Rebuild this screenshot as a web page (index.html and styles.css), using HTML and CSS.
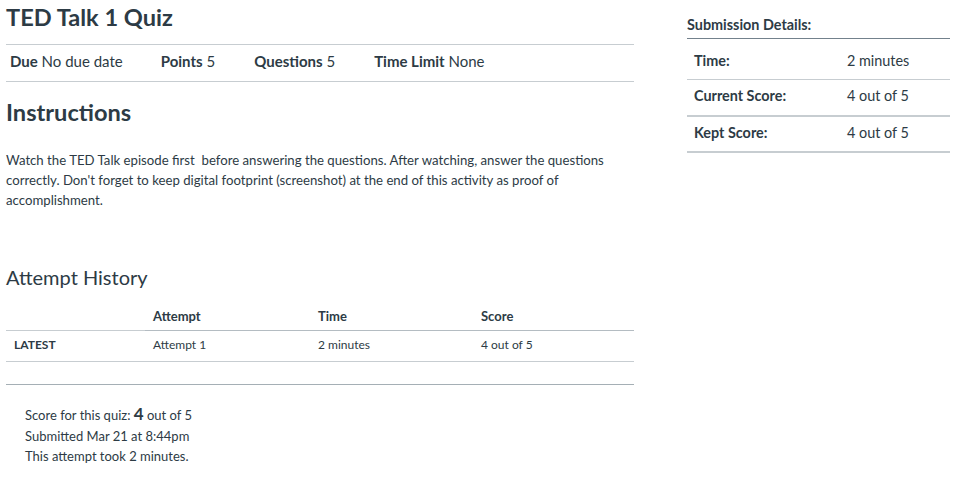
FILE: index.html
```html
<!DOCTYPE html>
<html>
<head>
<meta charset="utf-8">
<title>TED Talk 1 Quiz</title>
<link rel="stylesheet" href="styles.css">
</head>
<body>
<div class="page">
  <main class="main">
    <h1 class="title">TED Talk 1 Quiz</h1>
    <ul class="quiz-meta">
      <li class="meta-item"><span class="meta-label">Due</span> No due date</li>
      <li class="meta-item"><span class="meta-label">Points</span> 5</li>
      <li class="meta-item"><span class="meta-label">Questions</span> 5</li>
      <li class="meta-item"><span class="meta-label">Time Limit</span> None</li>
    </ul>
    <h2 class="section-title">Instructions</h2>
    <p class="instructions">Watch the TED Talk episode first&nbsp; before answering the questions. After watching, answer the questions correctly. Don't forget to keep digital footprint (screenshot) at the end of this activity as proof of accomplishment.</p>

    <h2 class="history-title">Attempt History</h2>
    <table class="history">
      <thead>
        <tr>
          <th class="col-first"></th>
          <th class="col-attempt">Attempt</th>
          <th class="col-time">Time</th>
          <th class="col-score">Score</th>
        </tr>
      </thead>
      <tbody>
        <tr>
          <td class="latest">LATEST</td>
          <td>Attempt 1</td>
          <td>2 minutes</td>
          <td>4 out of 5</td>
        </tr>
      </tbody>
    </table>
    <div class="history-end"></div>

    <div class="result">
      <div class="result-line first">Score for this quiz: <span class="big-score">4</span> out of 5</div>
      <div class="result-line">Submitted Mar 21 at 8:44pm</div>
      <div class="result-line">This attempt took 2 minutes.</div>
    </div>
  </main>

  <aside class="sidebar">
    <div class="details-title">Submission Details:</div>
    <div class="details-row row-1">
      <div class="details-label">Time:</div>
      <div class="details-value">2 minutes</div>
    </div>
    <div class="details-row row-2">
      <div class="details-label">Current Score:</div>
      <div class="details-value">4 out of 5</div>
    </div>
    <div class="details-row row-3">
      <div class="details-label">Kept Score:</div>
      <div class="details-value">4 out of 5</div>
    </div>
  </aside>
</div>
</body>
</html>
```

FILE: styles.css
```css
* { box-sizing: border-box; }

html, body {
  margin: 0;
  padding: 0;
  background: #ffffff;
}

body {
  font-family: "Lato", "Liberation Sans", sans-serif;
  color: #2d3b45;
}

.page {
  display: flex;
  align-items: flex-start;
  padding-left: 6px;
}

.main {
  width: 628px;
  flex: none;
}

.title {
  margin: 0 0 12px;
  padding-top: 2px;
  font-size: 23.6px;
  line-height: 30px;
  font-weight: 700;
}

.quiz-meta {
  list-style: none;
  margin: 0;
  padding: 0 0 3px 4px;
  height: 38px;
  display: flex;
  border-top: 1px solid #c7cdd1;
  border-bottom: 1px solid #c7cdd1;
  font-size: 15px;
  line-height: 33px;
}

.meta-item {
  margin-right: 39px;
}

.meta-item:first-child {
  margin-right: 38px;
}

.meta-label {
  font-weight: 700;
}

.section-title {
  margin: 15px 0 0;
  font-size: 23.6px;
  line-height: 30px;
  font-weight: 700;
}

.instructions {
  margin: 23px 0 0;
  font-size: 13.2px;
  line-height: 20px;
}

.history-title {
  margin: 53px 0 0;
  font-size: 20px;
  line-height: 28px;
  font-weight: 400;
}

.history {
  width: 628px;
  border-collapse: collapse;
  table-layout: fixed;
  font-size: 12px;
}

.history th {
  text-align: left;
  font-size: 13px;
  line-height: 20px;
  font-weight: 700;
  padding: 15px 8px 4px;
  border-bottom: 1px solid #c7cdd1;
}

.history th.col-attempt,
.history th.col-time,
.history th.col-score {
  border-bottom-color: #b4bcc2;
}

.col-first { width: 139px; }
.col-attempt { width: 165px; }
.col-time { width: 163px; }
.col-score { width: 161px; }

.history td {
  padding: 5px 8px 7px;
  line-height: 18px;
  border-bottom: 1px solid #c7cdd1;
}

.history td.latest {
  font-weight: 700;
  font-size: 12px;
}

.history-end {
  height: 23px;
  border-bottom: 1px solid #a5afb5;
}

.result {
  padding: 20px 0 0 19px;
  font-size: 13px;
}

.result-line {
  line-height: 20px;
}

.result-line.first {
  line-height: 21px;
}

.big-score {
  font-size: 17px;
  font-weight: 700;
  line-height: 1;
}

.sidebar {
  margin-left: 53px;
  width: 263px;
  flex: none;
  font-size: 14.4px;
}

.details-title {
  padding: 15px 0 3px;
  line-height: 20px;
  font-weight: 700;
  border-bottom: 1px solid #73818c;
}

.details-row {
  display: flex;
  line-height: 20px;
  padding-left: 7px;
}

.details-label {
  width: 153px;
  font-weight: 700;
}

.row-1 {
  padding-top: 12px;
  padding-bottom: 8px;
  border-bottom: 1px solid #c7cdd1;
}

.row-2 {
  padding-top: 6px;
  padding-bottom: 9px;
  border-bottom: 2px solid #c7cdd1;
}

.row-3 {
  padding-top: 6px;
  padding-bottom: 8px;
  border-bottom: 2px solid #c7cdd1;
}
```
